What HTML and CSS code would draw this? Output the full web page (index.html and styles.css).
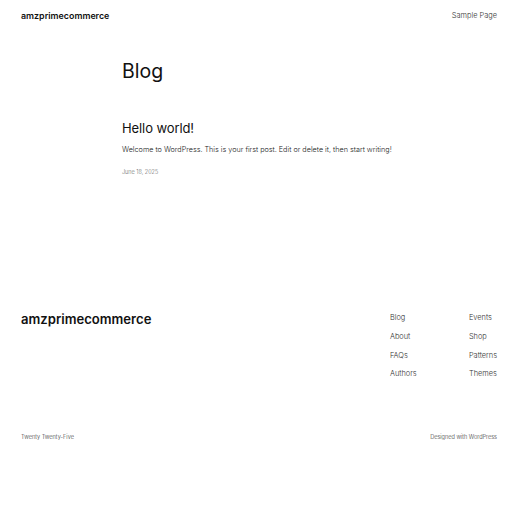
FILE: index.html
```html
<!DOCTYPE html>
<html lang="en">

<head>
    <meta charset="UTF-8">
    <meta name="viewport" content="width=device-width, initial-scale=1.0">
    <title>Blog – amzprimecommerce</title>

    <link rel="stylesheet" href="styles.css">
</head>

<body>

    <header class="site-header">
        <a class="site-title" href="#">amzprimecommerce</a>
        <nav class="site-nav">
            <a href="#">Sample Page</a>
        </nav>
    </header>

    <main class="content">
        <h1 class="page-title">Blog</h1>

        <article class="post">
            <h2 class="post__title">Hello world!</h2>
            <p class="post__excerpt">Welcome to WordPress. This is your first post. Edit or delete it, then start writing!</p>
            <div class="post__date">June 18, 2025</div>
        </article>
    </main>

    <footer class="site-footer">
        <div class="site-footer__top">
            <a class="site-footer__title" href="#">amzprimecommerce</a>
            <div class="footer-menus">
                <ul class="footer-menu">
                    <li><a href="#">Blog</a></li>
                    <li><a href="#">About</a></li>
                    <li><a href="#">FAQs</a></li>
                    <li><a href="#">Authors</a></li>
                </ul>
                <ul class="footer-menu">
                    <li><a href="#">Events</a></li>
                    <li><a href="#">Shop</a></li>
                    <li><a href="#">Patterns</a></li>
                    <li><a href="#">Themes</a></li>
                </ul>
            </div>
        </div>
        <div class="site-footer__bottom">
            <span>Twenty Twenty-Five</span>
            <span>Designed with <a href="#">WordPress</a></span>
        </div>
    </footer>

</body>

</html>
```

FILE: styles.css
```css
body {
    margin: 0;
    background-color: #fff;
    color: #111;
    font-family: Inter, "Noto Sans", sans-serif;
}

a {
    color: inherit;
    text-decoration: none;
}

.site-header {
    display: flex;
    align-items: center;
    justify-content: space-between;
    height: 30px;
    padding: 0 15px 0 21px;
}

.site-title {
    font-size: 8.9px;
    font-weight: 600;
}

.site-nav {
    font-size: 7.4px;
    font-weight: 300;
    color: #333;
}

.content {
    padding: 29px 21px 0 122px;
    height: 243px;
}

.page-title {
    margin: 0 0 37px;
    font-size: 19.5px;
    font-weight: 400;
    line-height: 24px;
}

.post__title {
    margin: 0 0 9px;
    font-size: 13px;
    font-weight: 400;
    letter-spacing: -0.1px;
    line-height: 16px;
}

.post__excerpt {
    margin: 0 0 14px;
    font-size: 7.25px;
    font-weight: 300;
    line-height: 10px;
    color: #222;
}

.post__date {
    font-size: 5.5px;
    font-weight: 300;
    color: #666;
}

.site-footer {
    padding: 0 15px 0 21px;
}

.site-footer__top {
    display: flex;
    justify-content: space-between;
    align-items: flex-start;
    height: 132px;
}

.site-footer__title {
    font-size: 13.1px;
    font-weight: 600;
    line-height: 18px;
    margin-top: 8px;
}

.footer-menus {
    display: flex;
    margin-top: 11px;
}

.footer-menu {
    list-style: none;
    margin: 0;
    padding: 0;
    width: 79px;
    font-size: 7.4px;
    font-weight: 300;
    line-height: 10px;
    color: #333;
}

.footer-menu:last-child {
    width: auto;
}

.footer-menu li {
    margin-bottom: 8.8px;
}

.site-footer__bottom {
    display: flex;
    justify-content: space-between;
    font-size: 5.6px;
    font-weight: 300;
    color: #333;
}

.site-footer__bottom a {
    text-decoration: underline;
}
```
